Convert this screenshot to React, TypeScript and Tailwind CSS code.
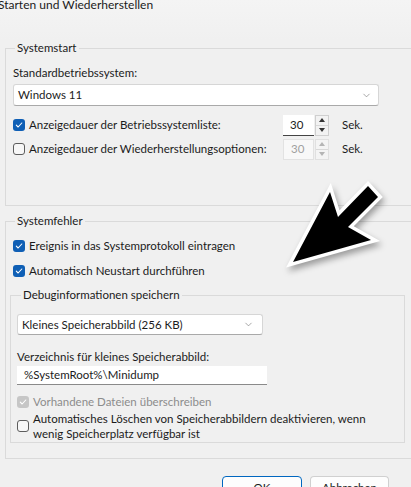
import { ChevronDown } from 'lucide-react';

function Check({ checked, disabled }: { checked?: boolean; disabled?: boolean }) {
  if (checked) {
    return (
      <span
        className={`flex h-[12px] w-[12px] shrink-0 items-center justify-center rounded-[3px] ${
          disabled ? 'bg-[#c6c6c6]' : 'bg-[#0f5fb5]'
        }`}
      >
        <svg width="8" height="8" viewBox="0 0 8 8" fill="none">
          <path d="M1.3 4.2 3.1 6 6.8 2" stroke="white" strokeWidth="1.1" strokeLinecap="round" strokeLinejoin="round" />
        </svg>
      </span>
    );
  }
  return <span className="h-[12px] w-[12px] shrink-0 rounded-[3px] border border-[#5d5d5d] bg-[#f7f7f7]" />;
}

function Spin({ disabled }: { disabled?: boolean }) {
  return (
    <div className="flex h-[21px] items-stretch">
      <div
        className={`flex w-[31px] items-center pl-[7px] ${
          disabled ? 'bg-[#f8f8f8] text-[#a0a0a0] border border-[#e2e2e2]' : 'bg-white border-b border-[#444]'
        }`}
      >
        30
      </div>
      <div
        className={`ml-[1px] flex w-[14px] flex-col border ${
          disabled ? 'border-[#e0e0e0] bg-[#f4f4f4]' : 'border-[#cfcfcf] bg-[#f2f2f2]'
        }`}
      >
        <div className="flex flex-1 items-center justify-center border-b border-[#d8d8d8]">
          <svg width="6" height="4" viewBox="0 0 6 4">
            <path d="M0 4 3 0 6 4Z" fill={disabled ? '#b5b5b5' : '#333'} />
          </svg>
        </div>
        <div className="flex flex-1 items-center justify-center">
          <svg width="6" height="4" viewBox="0 0 6 4">
            <path d="M0 0 3 4 6 0Z" fill={disabled ? '#b5b5b5' : '#333'} />
          </svg>
        </div>
      </div>
    </div>
  );
}

export default function App() {
  return (
    <div
      className="relative flex h-[487px] w-[411px] flex-col overflow-hidden bg-[#f0f0f0] text-[11.5px] leading-[16px] text-[#1b1b1b]"
      style={{ fontFamily: 'Lato, "Noto Sans", sans-serif' }}
    >
      {/* Title */}
      <div className="h-[40px] shrink-0 bg-gradient-to-b from-[#f4f4f4] to-[#f0f0f0]">
        <div className="-ml-[2px] -mt-[3px] text-[12px]">Starten und Wiederherstellen</div>
      </div>

      {/* Systemstart */}
      <fieldset className="ml-[5px] h-[166px] w-[420px] shrink-0 border border-[#dadada] pl-[7px]">
        <legend className="ml-[2px] px-[2px]">Systemstart</legend>
        <div className="mt-[9px]">Standardbetriebssystem:</div>
        <div className="mt-[3px] flex h-[22px] w-[366px] items-center justify-between rounded-[3px] border border-[#d6d6d6] border-b-[#a9a9a9] bg-white pl-[4px] pr-[6px]">
          <span>Windows 11</span>
          <ChevronDown size={11} strokeWidth={1.4} className="text-[#777]" />
        </div>
        <div className="mt-[8px] flex h-[22px] items-center whitespace-nowrap">
          <Check checked />
          <span className="ml-[4px] w-[254px]">Anzeigedauer der Betriebssystemliste:</span>
          <Spin />
          <span className="ml-[13px]">Sek.</span>
        </div>
        <div className="mt-[2px] flex h-[22px] items-center whitespace-nowrap">
          <Check />
          <span className="ml-[4px] w-[254px]">Anzeigedauer der Wiederherstellungsoptionen:</span>
          <Spin disabled />
          <span className="ml-[13px]">Sek.</span>
        </div>
      </fieldset>

      {/* Systemfehler */}
      <fieldset className="ml-[5px] mt-[7px] h-[246px] w-[420px] shrink-0 border border-[#dadada] pl-[7px]">
        <legend className="ml-[2px] px-[2px]">Systemfehler</legend>
        <div className="mt-[9px] flex h-[16px] items-center">
          <Check checked />
          <span className="ml-[4px]">Ereignis in das Systemprotokoll eintragen</span>
        </div>
        <div className="mt-[9px] flex h-[16px] items-center">
          <Check checked />
          <span className="ml-[4px]">Automatisch Neustart durchführen</span>
        </div>

        <fieldset className="-ml-[3px] mt-[8px] h-[156px] w-[395px] border border-[#dadada] pl-[6px]">
          <legend className="ml-[4px] px-[2px]">Debuginformationen speichern</legend>
          <div className="mt-[11px] flex h-[21px] w-[246px] items-center justify-between rounded-[3px] border border-[#d6d6d6] border-b-[#a9a9a9] bg-white pl-[4px] pr-[8px]">
            <span>Kleines Speicherabbild (256 KB)</span>
            <ChevronDown size={11} strokeWidth={1.4} className="text-[#777]" />
          </div>
          <div className="mt-[14px]">Verzeichnis für kleines Speicherabbild:</div>
          <div className="mt-[1px] flex h-[19px] w-[250px] items-center border-b border-[#8a8a8a] bg-white pl-[7px]">
            %SystemRoot%\Minidump
          </div>
          <div className="mt-[9px] flex h-[16px] items-center">
            <Check checked disabled />
            <span className="ml-[4px] text-[#8c8c8c]">Vorhandene Dateien überschreiben</span>
          </div>
          <div className="mt-[1px] flex items-center">
            <Check />
            <span className="ml-[4px] whitespace-nowrap leading-[15px]">
              Automatisches Löschen von Speicherabbildern deaktivieren, wenn
              <br />
              wenig Speicherplatz verfügbar ist
            </span>
          </div>
        </fieldset>
      </fieldset>

      {/* Buttons */}
      <div className="mt-[17px] flex justify-end gap-[8px] pr-[22px]">
        <button className="flex h-[24px] w-[80px] items-start justify-center rounded-[4px] border border-[#0067c0] bg-[#fdfdfd] pt-[3px]">
          OK
        </button>
        <button className="flex h-[24px] w-[79px] items-start justify-center rounded-[4px] border border-[#d0d0d0] border-b-[#b0b0b0] bg-[#fdfdfd] pt-[3px]">
          Abbrechen
        </button>
      </div>

      {/* Annotation arrow */}
      <svg
        className="absolute left-[270px] top-[170px]"
        width="130"
        height="110"
        viewBox="270 170 130 110"
        style={{ filter: 'drop-shadow(2px 4px 3px rgba(0,0,0,0.35))' }}
      >
        <polygon
          points="293,262 330,192 338,217 368,186 378,197 348,227 371,240"
          fill="#000"
          stroke="#fff"
          strokeWidth="7"
          strokeLinejoin="miter"
          paintOrder="stroke"
        />
      </svg>
    </div>
  );
}
